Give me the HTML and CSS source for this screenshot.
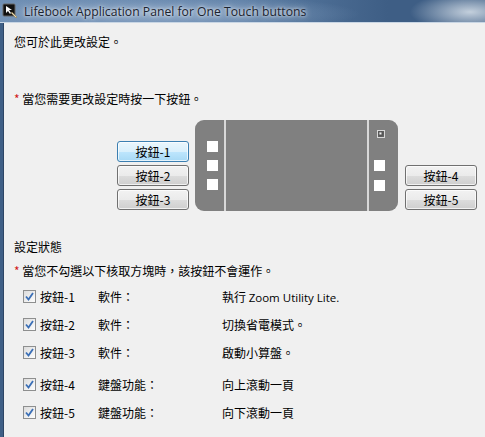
FILE: index.html
```html
<!DOCTYPE html>
<html lang="zh-Hant">
<head>
    <meta charset="UTF-8">
    <title>Lifebook Application Panel for One Touch buttons</title>
    <link rel="stylesheet" href="styles.css">
</head>
<body>
    <div class="window">
        <div class="titlebar">
            <svg class="app-icon" width="16" height="16" viewBox="0 0 16 16">
                <rect x="1" y="1" width="12" height="12" rx="1" fill="#111" stroke="#666"/>
                <path d="M4 3 L4 10 L6 8 L8 11 L9 10 L7 7 L10 7 Z" fill="#fff"/>
                <path d="M9 10 L14 15 L15 14 L10 9 Z" fill="#e8d8b0" stroke="#7a6a40" stroke-width="0.5"/>
            </svg>
            <span class="title">Lifebook Application Panel for One Touch buttons</span>
        </div>

        <div class="client">
            <p class="intro">您可於此更改設定。</p>
            <p class="note note-top"><span class="star">*</span> 當您需要更改設定時按一下按鈕。</p>

            <div class="panel-row">
                <div class="btn-col">
                    <button class="btn focused">按鈕-1</button>
                    <button class="btn">按鈕-2</button>
                    <button class="btn">按鈕-3</button>
                </div>

                <div class="device">
                    <div class="side side-left">
                        <span class="key"></span>
                        <span class="key"></span>
                        <span class="key"></span>
                    </div>
                    <div class="screen"></div>
                    <div class="side side-right">
                        <span class="mini"></span>
                        <span class="key first"></span>
                        <span class="key"></span>
                    </div>
                </div>

                <div class="btn-col">
                    <button class="btn">按鈕-4</button>
                    <button class="btn">按鈕-5</button>
                </div>
            </div>

            <p class="section">設定狀態</p>
            <p class="note note-bottom"><span class="star">*</span> 當您不勾選以下核取方塊時，該按鈕不會運作。</p>

            <div class="status">
                <div class="row">
                    <span class="check"><svg width="9" height="9" viewBox="0 0 9 9"><path d="M1 4.5 L3.5 7.5 L8 1" fill="none" stroke="#3b6fb6" stroke-width="1.8"/></svg></span>
                    <span class="name">按鈕-1</span>
                    <span class="kind">軟件：</span>
                    <span class="action">執行 <span class="latin">Zoom Utility Lite.</span></span>
                </div>
                <div class="row">
                    <span class="check"><svg width="9" height="9" viewBox="0 0 9 9"><path d="M1 4.5 L3.5 7.5 L8 1" fill="none" stroke="#3b6fb6" stroke-width="1.8"/></svg></span>
                    <span class="name">按鈕-2</span>
                    <span class="kind">軟件：</span>
                    <span class="action">切換省電模式。</span>
                </div>
                <div class="row">
                    <span class="check"><svg width="9" height="9" viewBox="0 0 9 9"><path d="M1 4.5 L3.5 7.5 L8 1" fill="none" stroke="#3b6fb6" stroke-width="1.8"/></svg></span>
                    <span class="name">按鈕-3</span>
                    <span class="kind">軟件：</span>
                    <span class="action">啟動小算盤。</span>
                </div>
                <div class="row row-gap">
                    <span class="check"><svg width="9" height="9" viewBox="0 0 9 9"><path d="M1 4.5 L3.5 7.5 L8 1" fill="none" stroke="#3b6fb6" stroke-width="1.8"/></svg></span>
                    <span class="name">按鈕-4</span>
                    <span class="kind">鍵盤功能：</span>
                    <span class="action">向上滾動一頁</span>
                </div>
                <div class="row">
                    <span class="check"><svg width="9" height="9" viewBox="0 0 9 9"><path d="M1 4.5 L3.5 7.5 L8 1" fill="none" stroke="#3b6fb6" stroke-width="1.8"/></svg></span>
                    <span class="name">按鈕-5</span>
                    <span class="kind">鍵盤功能：</span>
                    <span class="action">向下滾動一頁</span>
                </div>
            </div>
        </div>
    </div>
</body>
</html>
```

FILE: styles.css
```css
* {
    margin: 0;
    padding: 0;
    box-sizing: border-box;
}

body {
    width: 485px;
    height: 437px;
    overflow: hidden;
    background: #3f5f86;
    font-family: "Noto Sans CJK TC", "Noto Sans", sans-serif;
    font-size: 12px;
    color: #000;
}

.window {
    height: 100%;
    display: flex;
    flex-direction: column;
}

/* title bar */
.titlebar {
    height: 23px;
    display: flex;
    align-items: center;
    padding-left: 2px;
    background:
        radial-gradient(ellipse 60px 20px at 470px 12px, rgba(210,220,230,0.9), rgba(210,220,230,0) 100%),
        radial-gradient(ellipse 200px 20px at 160px 14px, rgba(150,175,205,0.8), rgba(150,175,205,0) 100%),
        linear-gradient(90deg, #6f8fb4 0%, #5a7ca3 50%, #3e5e85 80%, #3e5e85 100%);
    border-bottom: 1px solid #c9d6e4;
}

.app-icon {
    flex: none;
}

.title {
    margin-left: 6px;
    font-family: "Open Sans", "Noto Sans", sans-serif;
    font-size: 12.2px;
    color: #1b2330;
    text-shadow: 0 0 6px rgba(255,255,255,0.9), 0 0 3px rgba(255,255,255,0.8);
    white-space: nowrap;
}

/* client area */
.client {
    flex: 1;
    margin-left: 3px;
    background: #f0f0f0;
    border-left: 1px solid #2d4565;
    padding: 11px 0 0 10px;
}

.intro {
    line-height: 16px;
}

.note {
    line-height: 16px;
}

.note-top {
    margin-top: 41px;
}

.note-bottom {
    margin-top: 8px;
}

.star {
    color: #d01818;
}

.panel-row {
    display: flex;
    align-items: flex-end;
    margin-top: 13px;
}

.btn-col {
    display: flex;
    flex-direction: column;
    gap: 3px;
    margin-bottom: 1px;
}

.btn-col:first-child {
    margin-left: 103px;
}

.btn {
    width: 72px;
    height: 21px;
    font-family: "Noto Sans CJK TC", sans-serif;
    font-size: 12px;
    line-height: 19px;
    color: #000;
    border: 1px solid #707070;
    border-radius: 3px;
    background: linear-gradient(#f2f2f2 0%, #ebebeb 50%, #dddddd 51%, #cfcfcf 100%);
    box-shadow: inset 0 0 0 1px rgba(255,255,255,0.7);
}

.btn.focused {
    border-color: #3c7fb1;
    background: linear-gradient(#eaf6fd 0%, #d9f0fc 50%, #bee6fd 51%, #a7d9f5 100%);
}

/* device picture */
.device {
    width: 203px;
    height: 91px;
    margin: 0 7px 0 6px;
    display: flex;
    background: #d8d8d8;
    border-radius: 9px;
    overflow: hidden;
}

.side {
    width: 29px;
    background: #808080;
    display: flex;
    flex-direction: column;
}

.side-left {
    padding: 21px 0 0 12px;
    gap: 8px;
}

.side-right {
    padding: 10px 0 0 5px;
    gap: 9px;
}

.screen {
    flex: 1;
    margin: 0 2px;
    background: #808080;
}

.key {
    width: 11px;
    height: 11px;
    background: #fff;
}

.key.first {
    margin-top: 13px;
}

.mini {
    width: 8px;
    height: 8px;
    margin-left: 3px;
    border: 1px solid #d8d8d8;
    background: radial-gradient(circle at 40% 40%, #fff 0, #555 2px, #6a6a6a 100%);
}

.section {
    margin-top: 28px;
    line-height: 16px;
}

/* status list */
.status {
    margin-top: 3px;
    padding-left: 9px;
}

.row {
    display: flex;
    align-items: center;
    height: 28px;
}

.row-gap {
    margin-top: 4px;
}

.check {
    width: 13px;
    height: 13px;
    border: 1px solid #8e8f8f;
    background: linear-gradient(135deg, #dcdcdc, #fdfdfd);
    display: flex;
    align-items: center;
    justify-content: center;
}

.name {
    width: 58px;
    margin-left: 4px;
}

.kind {
    width: 124px;
}

.latin {
    font-family: "Open Sans", "Noto Sans", sans-serif;
    font-size: 11.5px;
}
```
